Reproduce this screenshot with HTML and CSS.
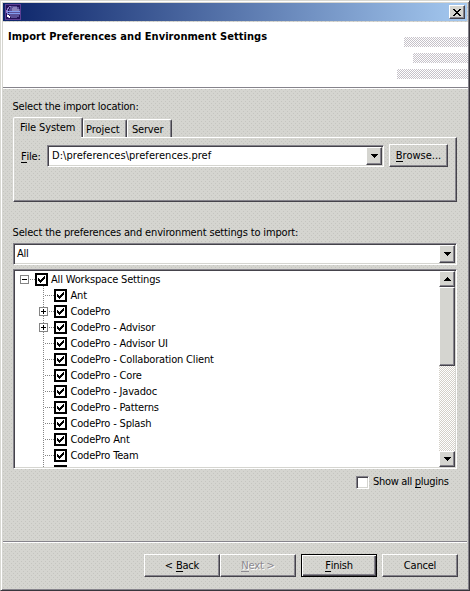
FILE: index.html
```html
<!DOCTYPE html>
<html lang="en">
<head>
<meta charset="utf-8">
<title>Import Preferences and Environment Settings</title>
<link rel="stylesheet" href="styles.css">
</head>
<body>
<svg width="0" height="0" class="defs">
  <symbol id="check" viewBox="0 0 13 13"><path d="M1 1h11v11H1z" fill="#fff" stroke="#000" stroke-width="2"/><path d="M3 5h1v1h1v1h1v-1h1v-1h1v-1h1v-1h1v3h-1v1h-1v1h-1v1h-1v1h-1v-1h-1v-1h-1z"/></symbol>
  <symbol id="plus" viewBox="0 0 9 9"><path d="M.5.5h8v8h-8z" fill="#fff" stroke="#848484"/><path d="M2 4.5h5M4.5 2v5" stroke="#000"/></symbol>
  <symbol id="minus" viewBox="0 0 9 9"><path d="M.5.5h8v8h-8z" fill="#fff" stroke="#848484"/><path d="M2 4.5h5" stroke="#000"/></symbol>
  <symbol id="down" viewBox="0 0 7 4"><path d="M0 0h7v1H6v1H5v1H4v1H3V3H2V2H1V1H0z"/></symbol>
  <symbol id="up" viewBox="0 0 7 4"><path d="M0 4h7V3H6V2H5V1H4V0H3v1H2v1H1v1H0z"/></symbol>
</svg>
<div class="window">
  <div class="titlebar">
    <svg class="logo" width="16" height="16" viewBox="0 0 16 16" shape-rendering="crispEdges"><path d="M0 0h16v16H0z" fill="#5c3f94"/><path d="M1 1h14v14H1z" fill="#24135a"/><path d="M6 2h6v1h2v2h1v6h-1v2h-2v1H6v-1H5v-2H4V5h1V3h1z" fill="#5a5098"/><path d="M8 3h4v2h2v2H7V4h1z" fill="#8880b8"/><path d="M4 2h2v1H4v2H3v6h1v2h1v1H3v-2H2V9H1V6h1V4h1V3h1z" fill="#8f7cc8"/><path d="M2 7h13v1H2zM2 9h13v1H2z" fill="#829bf0"/><path d="M2 11h2v1h1v2H4v-1H2z" fill="#fff"/></svg>
    <div class="btn close"><svg width="8" height="7" viewBox="0 0 8 7"><path d="M0 0h2v1h1v1h2V1h1V0h2v1H7v1H6v1H5v1h1v1h1v1h1v1H6V6H5V5H3v1H2v1H0V6h1V5h1V4h1V3H2V2H1V1H0z"/></svg></div>
  </div>
  <header class="header">
    <h1>Import Preferences and Environment Settings</h1>
    <div class="bars"><i class="b1"></i><i class="b2"></i><i class="b3"></i></div>
  </header>
  <main class="content">
    <div class="label"><span>Select the import location:</span></div>
    <div class="tabs"><div class="tab active"><span>File System</span></div><div class="tab"><span>Project</span></div><div class="tab"><span>Server</span></div></div>
    <section class="panel">
      <span class="file"><u>F</u>ile:</span>
      <div class="combo path"><span>D:\preferences\preferences.pref</span><div class="btn drop"><svg width="7" height="4"><use href="#down"/></svg></div></div>
      <div class="btn browse"><span><u>B</u>rowse...</span></div>
    </section>
    <div class="label second"><span>Select the preferences and environment settings to import:</span></div>
    <div class="combo filter"><span>All</span><div class="btn drop"><svg width="7" height="4"><use href="#down"/></svg></div></div>
    <div class="tree">
      <div class="rows">
        <div class="row root"><svg width="9" height="9"><use href="#minus"/></svg><i class="dots"></i><svg width="13" height="13"><use href="#check"/></svg><span>All Workspace Settings</span></div>
        <div class="row"><i class="dots"></i><svg width="13" height="13"><use href="#check"/></svg><span>Ant</span></div>
        <div class="row"><svg width="9" height="9"><use href="#plus"/></svg><i class="dots"></i><svg width="13" height="13"><use href="#check"/></svg><span>CodePro</span></div>
        <div class="row"><svg width="9" height="9"><use href="#plus"/></svg><i class="dots"></i><svg width="13" height="13"><use href="#check"/></svg><span>CodePro - Advisor</span></div>
        <div class="row"><i class="dots"></i><svg width="13" height="13"><use href="#check"/></svg><span>CodePro - Advisor UI</span></div>
        <div class="row"><i class="dots"></i><svg width="13" height="13"><use href="#check"/></svg><span>CodePro - Collaboration Client</span></div>
        <div class="row"><i class="dots"></i><svg width="13" height="13"><use href="#check"/></svg><span>CodePro - Core</span></div>
        <div class="row"><i class="dots"></i><svg width="13" height="13"><use href="#check"/></svg><span>CodePro - Javadoc</span></div>
        <div class="row"><i class="dots"></i><svg width="13" height="13"><use href="#check"/></svg><span>CodePro - Patterns</span></div>
        <div class="row"><i class="dots"></i><svg width="13" height="13"><use href="#check"/></svg><span>CodePro - Splash</span></div>
        <div class="row"><i class="dots"></i><svg width="13" height="13"><use href="#check"/></svg><span>CodePro Ant</span></div>
        <div class="row"><i class="dots"></i><svg width="13" height="13"><use href="#check"/></svg><span>CodePro Team</span></div>
        <div class="row last"><svg width="13" height="13"><use href="#check"/></svg></div>
      </div>
      <div class="scrollbar"><div class="btn"><svg width="7" height="4"><use href="#up"/></svg></div><div class="btn thumb"></div><div class="btn end"><svg width="7" height="4"><use href="#down"/></svg></div></div>
    </div>
    <div class="show"><i class="box"></i><span>Show all <u>p</u>lugins</span></div>
  </main>
  <footer class="footer">
    <div class="btn"><span>&lt; <u>B</u>ack</span></div>
    <div class="btn disabled"><span><u>N</u>ext &gt;</span></div>
    <div class="btn default"><span><u>F</u>inish</span></div>
    <div class="btn cancel"><span>Cancel</span></div>
  </footer>
</div>
</body>
</html>
```
FILE: styles.css
```css
* { box-sizing: border-box; }
:root {
  --face: #d5d5d0;
  --dark: #45434b;
  --mid: #85838b;
}
body {
  margin: 0; width: 470px; height: 591px; overflow: hidden;
  font: 11px/14px "DejaVu Sans Condensed", "DejaVu Sans", sans-serif;
  font-stretch: condensed; letter-spacing: -0.2px; color: #000;
}
.defs { position: absolute; }
svg { display: block; flex: none; shape-rendering: crispEdges; }
span { white-space: nowrap; }
u { text-decoration: none; border-bottom: 1px solid #000; display: inline-block; line-height: 11px; }
.window {
  width: 470px; height: 591px; display: flex; flex-direction: column;
  background:
    linear-gradient(#c8c8c3, #c8c8c3) 0 0 / 0 0 no-repeat,
    conic-gradient(from 0deg at 1px 1px, transparent 75%, #c5c5c0 0) 0 0 / 4px 4px,
    conic-gradient(from 0deg at 1px 1px, transparent 75%, #c5c5c0 0) 2px 2px / 4px 4px,
    var(--face);
  border: 1px solid #d8d8d2; border-right-color: #38363d; border-bottom-color: #38363d;
  box-shadow: inset 1px 1px #fff, inset -1px -1px var(--mid); padding: 2px;
}
.titlebar {
  height: 18px; flex: none; display: flex; align-items: center; justify-content: space-between;
  padding: 0 2px; background: linear-gradient(90deg, #0c2469, #a5c9f0);
}
.header {
  height: 66px; flex: none; display: flex; justify-content: space-between; margin: 1px -1px 0 0;
  background: #fff; border-bottom: 1px solid var(--mid); box-shadow: 0 1px #fff;
}
h1 { margin: 8px 0 0 5px; font-size: 11px; line-height: 14px; letter-spacing: .05px; white-space: nowrap; }
.bars { display: flex; flex-direction: column; align-items: flex-end; gap: 6px; padding-top: 15px; }
.bars i { height: 10px; background: repeating-conic-gradient(#c6c2c9 0 25%, #fff 0 50%) 0 0 / 2px 2px; }
.b1 { width: 64px; } .b2 { width: 55px; } .b3 { width: 71px; }
.content { padding: 11px 0 0 10px; flex: 1; display: flex; flex-direction: column; }
.label { height: 14px; flex: none; padding-top: 1px; margin-left: -.5px; }
.btn {
  display: flex; align-items: center; justify-content: center; border: 1px solid #fff;
  border-right-color: var(--dark); border-bottom-color: var(--dark); box-shadow: inset -1px -1px var(--mid);
}
.close { width: 16px; height: 14px; background: var(--face); }
.tabs { display: flex; align-items: flex-end; height: 20px; margin-top: 4px; flex: none; }
.tab {
  height: 18px; width: 44px; padding: 3px 0 0 2px; border: 1px solid #fff; border-bottom: 0;
  border-right: 1px solid var(--dark); border-radius: 2px 2px 0 0; box-shadow: inset -1px 0 var(--mid);
}
.tab:nth-child(2) { letter-spacing: -.02px; }
.tab:nth-child(3) { width: 45px; padding-left: 4px; }
.tab.active { width: 70px; height: 20px; padding: 3px 0 0 6px; letter-spacing: -.12px; }
.panel {
  width: 444px; height: 65px; flex: none; display: flex; align-items: flex-start; padding: 6px 0 0 7px;
  border: 1px solid #fff; border-right-color: var(--dark); border-bottom-color: var(--dark);
  box-shadow: inset -1px -1px var(--mid); position: relative;
}
.panel::before { content: ""; position: absolute; left: 0; top: -1px; width: 67px; height: 1px; background: var(--face); }
.file { width: 26px; padding-top: 6px; }
.combo {
  height: 22px; display: flex; justify-content: space-between; background: #fff; border: 1px solid var(--mid);
  border-right-color: #fff; border-bottom-color: #fff; box-shadow: inset 1px 1px var(--dark), inset -1px -1px var(--face); padding: 1px; line-height: 18px;
}
.combo > span { padding-left: 3px; }
.drop { width: 16px; height: 18px; background: var(--face); }
.path { width: 337px; margin-top: 1px; letter-spacing: .05px; }
.browse { width: 59px; height: 23px; margin-left: 5px; letter-spacing: 0; }
.second { margin-top: 23px; letter-spacing: -.15px; }
.filter { width: 444px; margin-top: 4px; flex: none; }
.filter > span { padding-left: 2px; }
.tree {
  width: 444px; height: 200px; margin-top: 4px; flex: none; display: flex; background: #fff; border: 1px solid var(--mid);
  border-right-color: #fff; border-bottom-color: #fff; box-shadow: inset 1px 1px var(--dark), inset -1px -1px var(--face); padding: 1px;
}
.rows {
  flex: 1; overflow: hidden; height: 196px;
  background: repeating-linear-gradient(#848484 0 1px, transparent 1px 2px) 28px 15px / 1px 181px no-repeat;
}
.row { height: 16px; display: flex; align-items: center; padding-left: 24px; }
.row > .dots:first-child { margin-left: 5px; width: 10px; }
.row.root { padding-left: 5px; }
.row.last { padding-left: 39px; }
.row span { margin-left: 3.5px; padding-top: 1px; letter-spacing: -.18px; }
.row.root span { margin-left: 3px; }
.dots { width: 6px; height: 1px; background: repeating-linear-gradient(90deg, transparent 0 1px, #848484 1px 2px); }
.scrollbar {
  width: 16px; height: 196px; display: flex; flex-direction: column;
  background: repeating-conic-gradient(#d4d0c8 0 25%, #fff 0 50%) 0 0 / 2px 2px;
}
.scrollbar .btn { height: 16px; flex: none; background: var(--face); }
.scrollbar .thumb { height: 79px; }
.scrollbar .end { margin-top: auto; }
.show { display: flex; align-items: center; margin: 6px 0 0 343px; height: 14px; }
.box { width: 13px; height: 13px; background: #fff; border: 1px solid var(--mid); border-right-color: #fff; border-bottom-color: #fff; box-shadow: inset 1px 1px var(--dark), inset -1px -1px var(--face); }
.show span { margin-left: 4px; letter-spacing: -.3px; }
.footer {
  height: 47px; flex: none; display: flex; padding: 12px 0 0 141px; border-top: 1px solid var(--mid); box-shadow: inset 0 1px #fff;
}
.footer .btn { width: 76px; height: 23px; }
.footer .default { margin: 0 5px; border: 1px solid #000; box-shadow: inset 1px 1px #fff, inset -1px -1px var(--dark), inset -2px -2px var(--mid); }
.disabled { color: #8b8990; text-shadow: 1px 1px #fff; }
.disabled u { border-color: #8b8990; }
```
